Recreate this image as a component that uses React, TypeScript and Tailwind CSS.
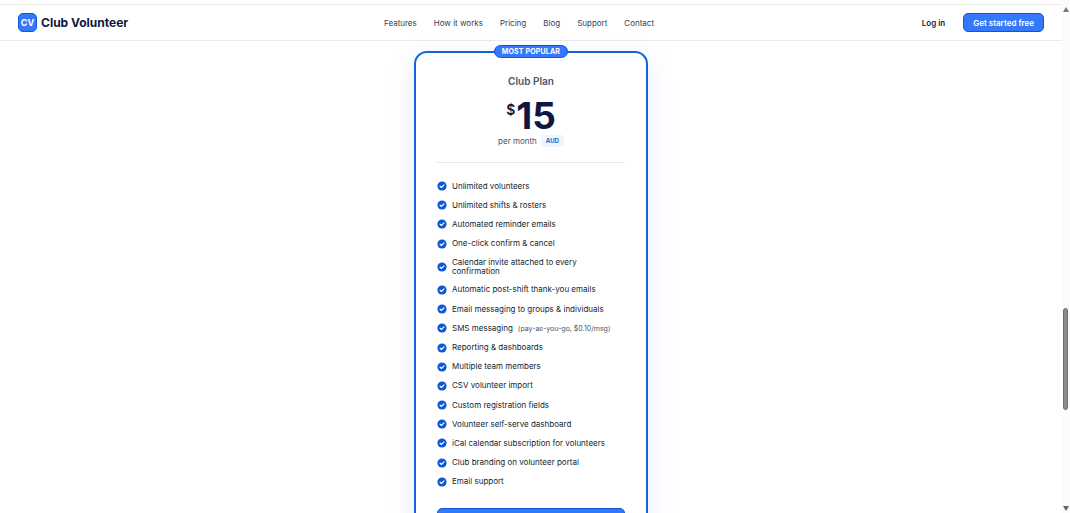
import React from "react";

const navLinks = ["Features", "How it works", "Pricing", "Blog", "Support", "Contact"];

const features: { label: string; note?: string }[] = [
  { label: "Unlimited volunteers" },
  { label: "Unlimited shifts & rosters" },
  { label: "Automated reminder emails" },
  { label: "One-click confirm & cancel" },
  { label: "Calendar invite attached to every confirmation" },
  { label: "Automatic post-shift thank-you emails" },
  { label: "Email messaging to groups & individuals" },
  { label: "SMS messaging", note: "(pay-as-you-go, $0.10/msg)" },
  { label: "Reporting & dashboards" },
  { label: "Multiple team members" },
  { label: "CSV volunteer import" },
  { label: "Custom registration fields" },
  { label: "Volunteer self-serve dashboard" },
  { label: "iCal calendar subscription for volunteers" },
  { label: "Club branding on volunteer portal" },
  { label: "Email support" },
];

function CheckIcon() {
  return (
    <svg viewBox="0 0 20 20" className="size-[10px] shrink-0" aria-hidden="true">
      <circle cx="10" cy="10" r="9.2" fill="#0b57d8" />
      <path d="M6 10.2l2.8 2.8 5.2-5.4" fill="none" stroke="#fff" strokeWidth="2.2" strokeLinecap="round" strokeLinejoin="round" />
    </svg>
  );
}

function Header() {
  return (
    <header className="mt-1 flex h-[37px] shrink-0 items-center justify-between border-t border-b border-t-[#ececec] border-b-[#e8eaee] bg-white px-[18px]">
      <a href="#home" className="flex items-center gap-1 text-[12px] font-bold text-[#0f1740]">
        <span className="flex size-[19px] items-center justify-center rounded-[5px] border border-[#0b57d8] bg-[#3478fb] text-[9px] font-bold text-white">
          CV
        </span>
        Club Volunteer
      </a>
      <nav className="mr-3 flex gap-[17px] pt-px text-[8px] text-[#334155]">
        {navLinks.map((link) => (
          <a key={link} href="#page">{link}</a>
        ))}
      </nav>
      <div className="flex items-center gap-[18px] text-[8px] font-semibold">
        <a href="#login" className="text-[#0f1740]">Log in</a>
        <button type="button" className="h-[19px] rounded-[5px] border border-[#0b57d8] bg-[#3478fb] px-[9px] text-white">
          Get started free
        </button>
      </div>
    </header>
  );
}

function PlanCard() {
  return (
    <section className="mt-[10px] flex w-[234px] shrink-0 flex-col items-center rounded-t-[13px] border-2 border-b-0 border-[#1662d6] bg-white px-[21px] shadow-[0_8px_28px_rgba(37,99,235,0.12)]">
      <p className="-mt-2 flex h-[13px] items-center rounded-full border border-[#0b57d8] bg-[#3478fb] px-[7px] text-[7px] leading-[11px] font-bold tracking-wide text-white">
        MOST POPULAR
      </p>
      <h2 className="mt-[15px] text-[10px] leading-4 font-semibold text-[#475569]">Club Plan</h2>
      <p className="mt-[9px] flex items-start gap-px font-bold text-[#0f1740]">
        <span className="mt-1 text-[14px] leading-4 font-semibold">$</span>
        <span className="text-[37px] leading-9">15</span>
      </p>
      <p className="mt-px flex h-3 items-center gap-1 text-[8px] text-[#475569]">
        per month
        <span className="rounded-xs bg-[#eff5ff] px-[5px] text-[6px] leading-3 font-bold text-[#1662d6]">AUD</span>
      </p>
      <hr className="mt-[15px] w-full border-[#e4e7ec]" />
      <ul className="mt-[18px] flex h-[306px] w-full shrink-0 flex-col justify-between text-[8px] leading-[9px] text-[#0f1f33]">
        {features.map(({ label, note }) => (
          <li key={label} className="flex items-center gap-[5px]">
            <CheckIcon />
            <span className="max-w-[160px] shrink-0">{label}</span>
            {note && <span className="text-[7px] whitespace-nowrap text-[#475569]">{note}</span>}
          </li>
        ))}
      </ul>
      <button type="button" className="mt-[21px] h-6 w-full shrink-0 rounded-[5px] border border-[#0b57d8] bg-[#3478fb] text-[8px] font-semibold text-white">
        Get started free
      </button>
    </section>
  );
}

function ScrollTrack() {
  return (
    <div className="flex w-2 shrink-0 flex-col items-start bg-[#fcfcfc] pt-[7px] pb-[2px] pl-px" aria-hidden="true">
      <svg viewBox="0 0 6 5" className="h-[5px] w-[6px]"><path d="M3 0l3 5H0z" fill="#777" /></svg>
      <div className="flex-[297] basis-0" />
      <div className="w-[5px] flex-[101] basis-0 rounded-full border border-[#6d6d6d] bg-[#8b8b8b]" />
      <div className="flex-[96] basis-0" />
      <svg viewBox="0 0 6 5" className="h-[5px] w-[6px]"><path d="M3 5l3-5H0z" fill="#666" /></svg>
    </div>
  );
}

export default function App() {
  return (
    <div className="flex h-screen overflow-hidden bg-white font-['Inter',sans-serif]">
      <div className="flex min-w-0 flex-1 flex-col">
        <Header />
        <main className="flex min-h-0 flex-1 items-start justify-center">
          <PlanCard />
        </main>
      </div>
      <ScrollTrack />
    </div>
  );
}
